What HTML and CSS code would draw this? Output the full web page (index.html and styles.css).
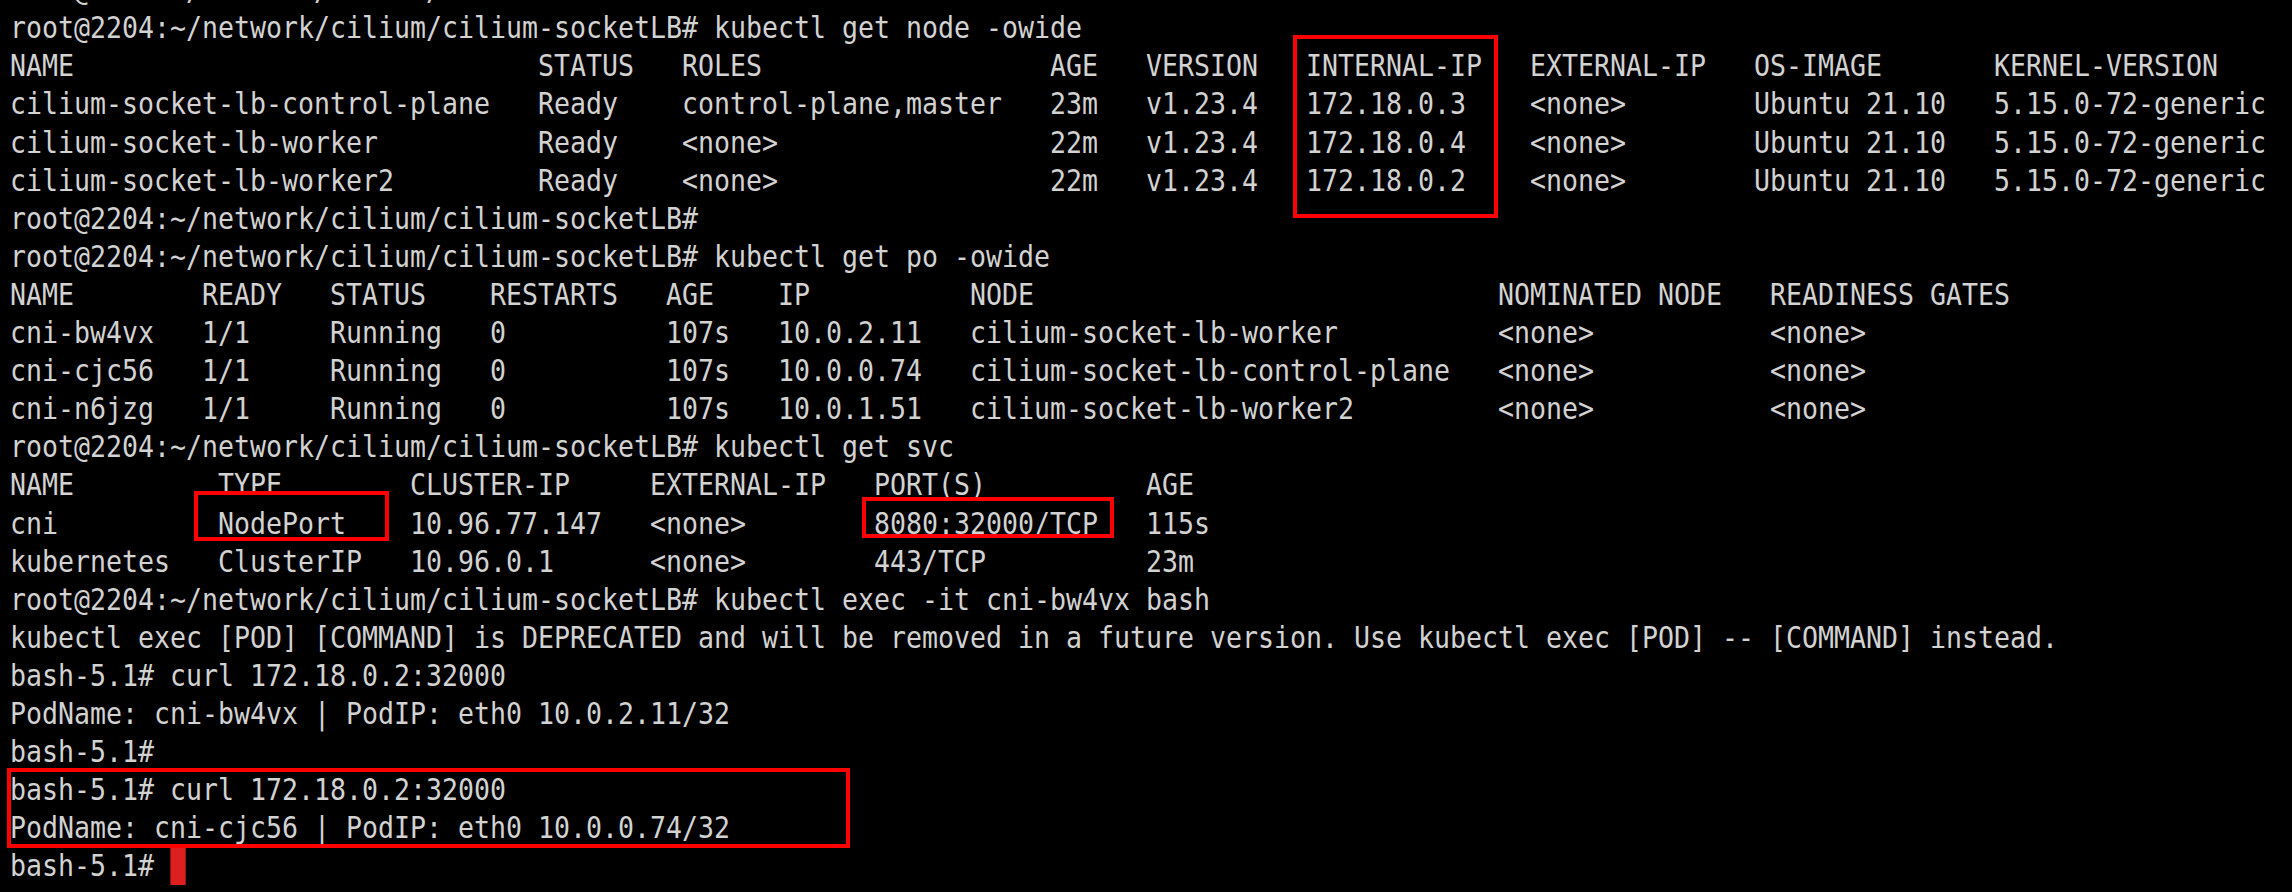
FILE: index.html
```html
<!DOCTYPE html>
<html lang="en">
<head>
<meta charset="utf-8">
<title>Terminal</title>
<link rel="stylesheet" href="styles.css">
</head>
<body>
<div class="screen">
<pre class="term">root@2204:~/network/cilium/cilium-socketLB#
root@2204:~/network/cilium/cilium-socketLB# kubectl get node -owide
NAME                             STATUS   ROLES                  AGE   VERSION   INTERNAL-IP   EXTERNAL-IP   OS-IMAGE       KERNEL-VERSION
cilium-socket-lb-control-plane   Ready    control-plane,master   23m   v1.23.4   172.18.0.3    &lt;none&gt;        Ubuntu 21.10   5.15.0-72-generic
cilium-socket-lb-worker          Ready    &lt;none&gt;                 22m   v1.23.4   172.18.0.4    &lt;none&gt;        Ubuntu 21.10   5.15.0-72-generic
cilium-socket-lb-worker2         Ready    &lt;none&gt;                 22m   v1.23.4   172.18.0.2    &lt;none&gt;        Ubuntu 21.10   5.15.0-72-generic
root@2204:~/network/cilium/cilium-socketLB#
root@2204:~/network/cilium/cilium-socketLB# kubectl get po -owide
NAME        READY   STATUS    RESTARTS   AGE    IP          NODE                             NOMINATED NODE   READINESS GATES
cni-bw4vx   1/1     Running   0          107s   10.0.2.11   cilium-socket-lb-worker          &lt;none&gt;           &lt;none&gt;
cni-cjc56   1/1     Running   0          107s   10.0.0.74   cilium-socket-lb-control-plane   &lt;none&gt;           &lt;none&gt;
cni-n6jzg   1/1     Running   0          107s   10.0.1.51   cilium-socket-lb-worker2         &lt;none&gt;           &lt;none&gt;
root@2204:~/network/cilium/cilium-socketLB# kubectl get svc
NAME         TYPE        CLUSTER-IP     EXTERNAL-IP   PORT(S)          AGE
cni          NodePort    10.96.77.147   &lt;none&gt;        8080:32000/TCP   115s
kubernetes   ClusterIP   10.96.0.1      &lt;none&gt;        443/TCP          23m
root@2204:~/network/cilium/cilium-socketLB# kubectl exec -it cni-bw4vx bash
kubectl exec [POD] [COMMAND] is DEPRECATED and will be removed in a future version. Use kubectl exec [POD] -- [COMMAND] instead.
bash-5.1# curl 172.18.0.2:32000
PodName: cni-bw4vx | PodIP: eth0 10.0.2.11/32
bash-5.1#
bash-5.1# curl 172.18.0.2:32000
PodName: cni-cjc56 | PodIP: eth0 10.0.0.74/32
bash-5.1# <span class="cursor"></span></pre>
<div class="mark mark-ip"></div>
<div class="mark mark-type"></div>
<div class="mark mark-port"></div>
<div class="mark mark-curl"></div>
</div>
</body>
</html>
```
FILE: styles.css
```css
html, body {
  margin: 0;
  padding: 0;
  background: #000;
}
.screen {
  position: relative;
  width: 2292px;
  height: 892px;
  overflow: hidden;
  background: #000;
}
.term {
  margin: -28.8px 0 0 10px;
  font-family: "DejaVu Sans Mono", "Liberation Mono", monospace;
  font-size: 29.5px;
  line-height: 38.1px;
  color: #d2d2d2;
  white-space: pre;
  transform: scaleX(0.9009);
  transform-origin: 0 0;
}
.cursor {
  display: inline-block;
  width: 1ch;
  height: 38.1px;
  vertical-align: top;
  background: #dc1f1f;
}
.mark {
  position: absolute;
  box-sizing: border-box;
  border: 4px solid #ff0000;
}
.mark-ip {
  left: 1293px;
  top: 35px;
  width: 205px;
  height: 183px;
}
.mark-type {
  left: 194px;
  top: 491px;
  width: 195px;
  height: 50px;
}
.mark-port {
  left: 862px;
  top: 497px;
  width: 252px;
  height: 41px;
}
.mark-curl {
  left: 7px;
  top: 768px;
  width: 843px;
  height: 80px;
}
```
